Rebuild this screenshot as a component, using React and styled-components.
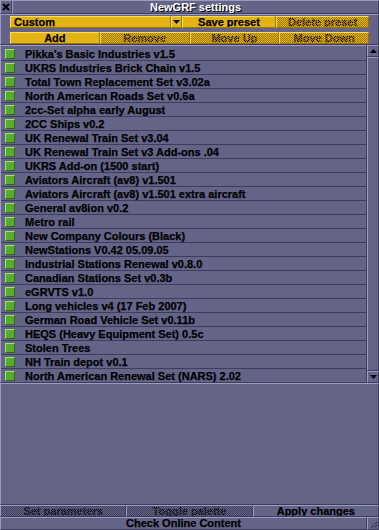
import React from "react";
import styled, { createGlobalStyle, css } from "styled-components";

const GlobalStyle = createGlobalStyle`
  html, body {
    margin: 0;
    padding: 0;
    background: #000;
  }
  body {
    font-family: "Liberation Sans", Arial, sans-serif;
    font-weight: bold;
    font-size: 11px;
  }
`;

const grey = { face: "#646488", light: "#9c9cc0", dark: "#3c3c5c", checker: "#40405c" };
const yellow = { face: "#e4b414", light: "#fcdc58", dark: "#9c7400", checker: "#a07800" };

const bevel = (c) => css`
  background: ${c.face};
  border: 1px solid;
  border-color: ${c.light} ${c.dark} ${c.dark} ${c.light};
  box-sizing: border-box;
`;

const disabledChecker = (c) => css`
  position: relative;
  &::after {
    content: "";
    position: absolute;
    inset: 0;
    background-image: repeating-conic-gradient(${c.checker} 0 25%, transparent 0 50%);
    background-size: 2px 2px;
  }
`;

const Window = styled.div`
  width: 379px;
  height: 530px;
  display: flex;
  flex-direction: column;
  background: ${grey.face};
  overflow: hidden;
`;

const TitleBar = styled.div`
  display: flex;
  height: 14px;
`;

const CloseBox = styled.div`
  ${bevel(grey)}
  width: 12px;
  display: flex;
  align-items: center;
  justify-content: center;
`;

const Caption = styled.div`
  ${bevel(grey)}
  flex: 1;
  color: #fff;
  text-align: center;
  line-height: 12px;
  text-shadow: 1px 1px 0 #000;
`;

const TopPanel = styled.div`
  ${bevel(grey)}
  height: 31px;
  padding: 1px 9px 0 9px;
  display: flex;
  flex-direction: column;
  gap: 4px;
`;

const ButtonRow = styled.div`
  display: flex;
  height: 12px;
`;

const Button = styled.div`
  ${(p) => bevel(p.$yellow ? yellow : grey)}
  flex: ${(p) => p.$flex || 1};
  color: #000;
  text-align: ${(p) => (p.$left ? "left" : "center")};
  padding-left: ${(p) => (p.$left ? "3px" : "0")};
  line-height: 10px;
  white-space: nowrap;
  overflow: hidden;
  -webkit-text-stroke: 0.25px #000;
  ${(p) => p.$disabled && disabledChecker(p.$yellow ? yellow : grey)}
`;

const ArrowBtn = styled.div`
  ${(p) => bevel(p.$yellow ? yellow : grey)}
  width: ${(p) => p.$w || 11}px;
  height: ${(p) => p.$h || 11}px;
  flex: none;
  display: flex;
  align-items: center;
  justify-content: center;
`;

const ListArea = styled.div`
  display: flex;
  height: 338px;
`;

const List = styled.div`
  ${bevel(grey)}
  flex: 1;
  padding-top: 1px;
`;

const Row = styled.div`
  height: 14px;
  box-sizing: border-box;
  border-bottom: 1px solid ${grey.dark};
  display: flex;
  align-items: center;
  gap: 10px;
  padding-left: 4px;
  color: #000;
  -webkit-text-stroke: 0.25px #000;
`;

const GreenSquare = styled.span`
  width: 10px;
  height: 10px;
  box-sizing: border-box;
  background: #58ac2c;
  border: 1px solid;
  border-color: #a4e070 #2c6c14 #2c6c14 #a4e070;
  flex: none;
`;

const Scrollbar = styled.div`
  width: 12px;
  display: flex;
  flex-direction: column;
`;

const Track = styled.div`
  ${bevel(grey)}
  flex: 1;
`;

const InfoPanel = styled.div`
  ${bevel(grey)}
  flex: 1;
`;

const BottomRow = styled.div`
  display: flex;
  height: 12px;
`;

const BottomBar = styled.div`
  display: flex;
  height: 13px;
`;

const Resize = styled.div`
  ${bevel(grey)}
  width: 12px;
  display: flex;
  align-items: flex-end;
  justify-content: flex-end;
`;

const Tri = ({ down }) => (
  <svg width="7" height="4" viewBox="0 0 7 4">
    <polygon points={down ? "0,0 7,0 3.5,4" : "0,4 7,4 3.5,0"} fill="#000" />
  </svg>
);

const grfs = [
  "Pikka’s Basic Industries v1.5",
  "UKRS Industries Brick Chain v1.5",
  "Total Town Replacement Set v3.02a",
  "North American Roads Set v0.6a",
  "2cc-Set alpha early August",
  "2CC Ships v0.2",
  "UK Renewal Train Set v3.04",
  "UK Renewal Train Set v3 Add-ons .04",
  "UKRS Add-on (1500 start)",
  "Aviators Aircraft (av8) v1.501",
  "Aviators Aircraft (av8) v1.501 extra aircraft",
  "General av8ion v0.2",
  "Metro rail",
  "New Company Colours (Black)",
  "NewStations V0.42 05.09.05",
  "Industrial Stations Renewal v0.8.0",
  "Canadian Stations Set v0.3b",
  "eGRVTS v1.0",
  "Long vehicles v4 (17 Feb 2007)",
  "German Road Vehicle Set v0.11b",
  "HEQS (Heavy Equipment Set) 0.5c",
  "Stolen Trees",
  "NH Train depot v0.1",
  "North American Renewal Set (NARS) 2.02",
];

export default function App() {
  return (
    <>
      <GlobalStyle />
      <Window>
        <TitleBar>
          <CloseBox>
            <svg width="8" height="8" viewBox="0 0 8 8">
              <path d="M1 1 L7 7 M7 1 L1 7" stroke="#000" strokeWidth="2" />
            </svg>
          </CloseBox>
          <Caption>NewGRF settings</Caption>
        </TitleBar>
        <TopPanel>
          <ButtonRow>
            <Button $yellow $left $flex="0 0 161px">Custom</Button>
            <ArrowBtn $yellow $h={12}>
              <Tri down />
            </ArrowBtn>
            <Button $yellow $flex="0 0 94px">Save preset</Button>
            <Button $yellow $disabled $flex="0 0 93px">Delete preset</Button>
          </ButtonRow>
          <ButtonRow>
            <Button $yellow>Add</Button>
            <Button $yellow $disabled>Remove</Button>
            <Button $yellow $disabled>Move Up</Button>
            <Button $yellow $disabled>Move Down</Button>
          </ButtonRow>
        </TopPanel>
        <ListArea>
          <List>
            {grfs.map((name, i) => (
              <Row key={i}>
                <GreenSquare />
                <span>{name}</span>
              </Row>
            ))}
          </List>
          <Scrollbar>
            <ArrowBtn $w={12} $h={12}>
              <Tri />
            </ArrowBtn>
            <Track />
            <ArrowBtn $w={12} $h={12}>
              <Tri down />
            </ArrowBtn>
          </Scrollbar>
        </ListArea>
        <InfoPanel />
        <BottomRow>
          <Button $disabled>Set parameters</Button>
          <Button $disabled>Toggle palette</Button>
          <Button>Apply changes</Button>
        </BottomRow>
        <BottomBar>
          <Button>Check Online Content</Button>
          <Resize>
            <svg width="8" height="8" viewBox="0 0 8 8">
              <path d="M7 1 L1 7 M7 4 L4 7" stroke="#000" strokeWidth="1" strokeDasharray="1 1" />
            </svg>
          </Resize>
        </BottomBar>
      </Window>
    </>
  );
}
